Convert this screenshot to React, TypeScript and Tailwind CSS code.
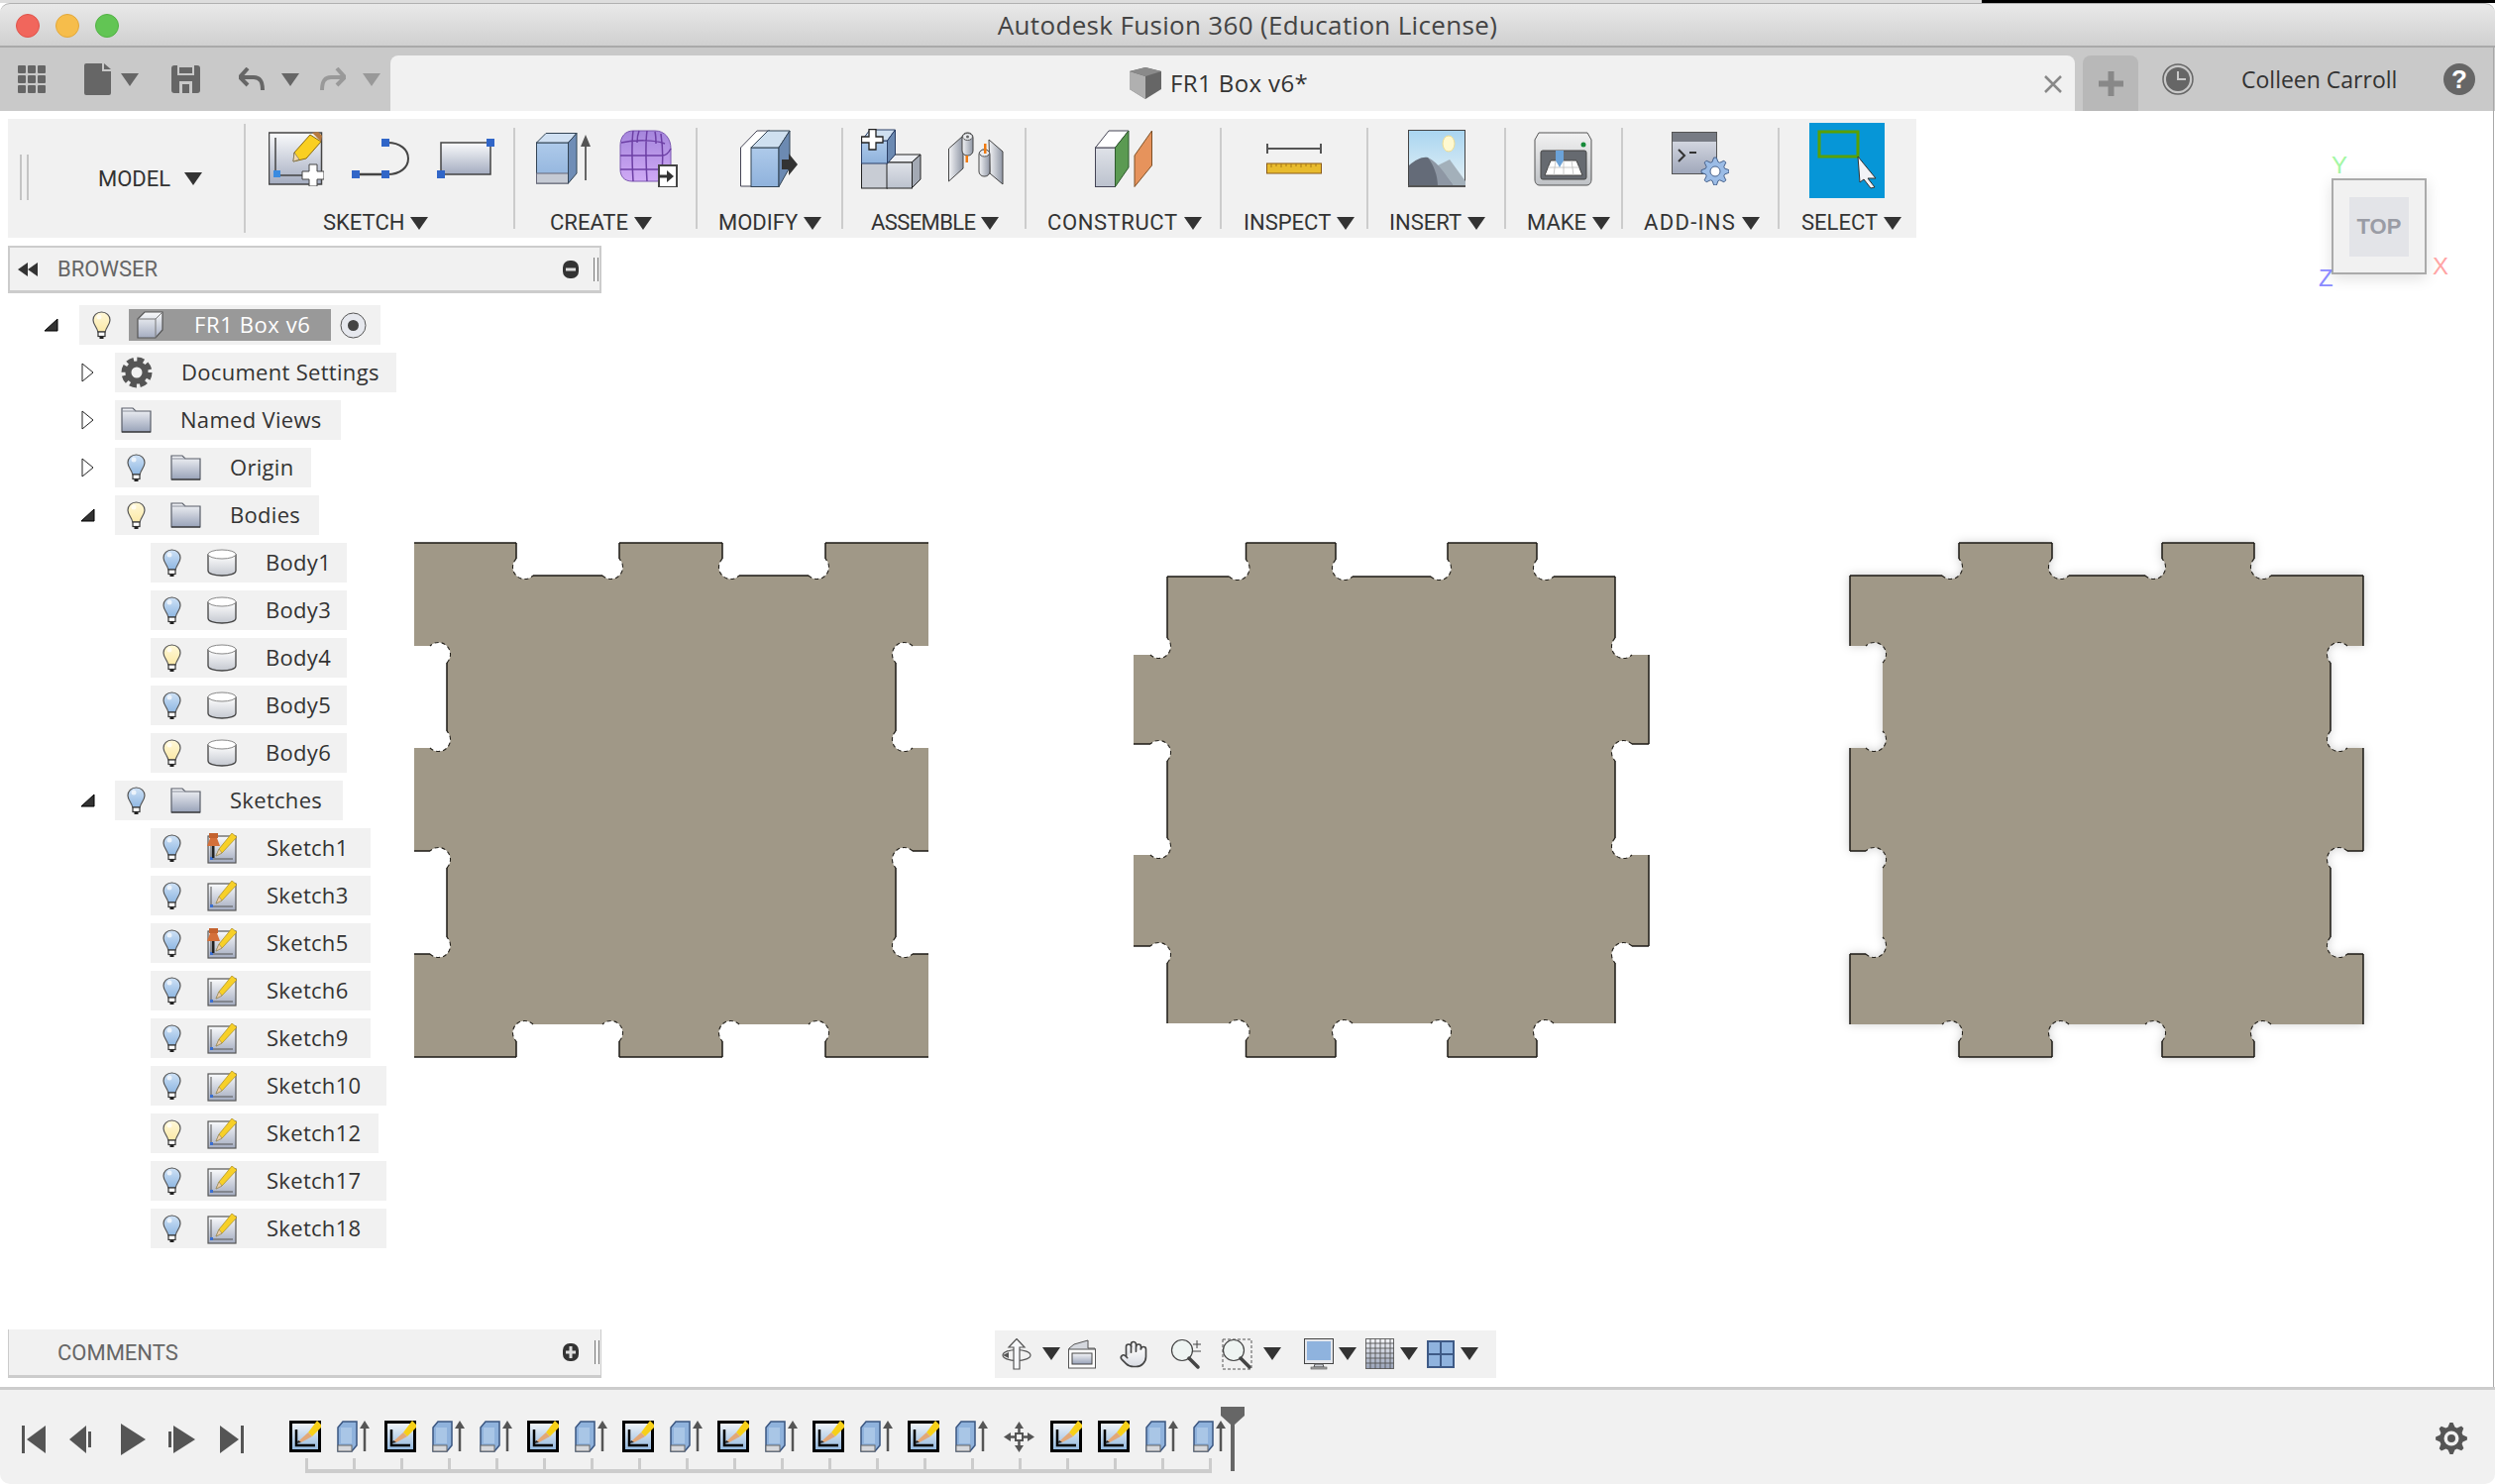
import React from "react";
import { Hand } from "lucide-react";

const Tri = ({ w = 18, h = 13, c = "#333" }: { w?: number; h?: number; c?: string }) => (
  <svg width={w} height={h} viewBox={`0 0 ${w} ${h}`} className="shrink-0">
    <polygon points={`0,0 ${w},0 ${w / 2},${h}`} fill={c} />
  </svg>
);

const Defs = () => (
  <svg width="0" height="0" className="absolute">
    <defs>
      <linearGradient id="gSheet" x1="0" y1="0" x2="0" y2="1"><stop offset="0" stopColor="#fafbfc" /><stop offset="1" stopColor="#a4acc0" /></linearGradient>
      <linearGradient id="gFolder" x1="0" y1="0" x2="0" y2="1"><stop offset="0" stopColor="#f4f5f8" /><stop offset="1" stopColor="#98a2b8" /></linearGradient>
      <linearGradient id="gBulbB" x1="0" y1="0" x2="0" y2="1"><stop offset="0" stopColor="#cfe2f6" /><stop offset="1" stopColor="#8fb7e2" /></linearGradient>
      <linearGradient id="gBulbY" x1="0" y1="0" x2="0" y2="1"><stop offset="0" stopColor="#fff8d8" /><stop offset="1" stopColor="#fbe9a8" /></linearGradient>
      <linearGradient id="gCyl" x1="0" y1="0" x2="0" y2="1"><stop offset="0" stopColor="#ffffff" /><stop offset="1" stopColor="#c4c8d0" /></linearGradient>
      <linearGradient id="gSide" x1="0" y1="0" x2="1" y2="0"><stop offset="0" stopColor="#f4f5f7" /><stop offset="1" stopColor="#8f96a4" /></linearGradient>
      <linearGradient id="gBlue" x1="0" y1="0" x2="0" y2="1"><stop offset="0" stopColor="#aecaea" /><stop offset="1" stopColor="#8fb2dc" /></linearGradient>
      <linearGradient id="gGrey" x1="0" y1="0" x2="0" y2="1"><stop offset="0" stopColor="#dfe2e8" /><stop offset="1" stopColor="#bcc2ce" /></linearGradient>
      <linearGradient id="gForm" x1="0" y1="0" x2="0" y2="1"><stop offset="0" stopColor="#a586dc" /><stop offset="1" stopColor="#cfa9f5" /></linearGradient>
      <linearGradient id="gSky" x1="0" y1="0" x2="0" y2="1"><stop offset="0" stopColor="#a9d5f0" /><stop offset="1" stopColor="#e6f1f6" /></linearGradient>
      <linearGradient id="gMake" x1="0" y1="0" x2="0" y2="1"><stop offset="0" stopColor="#f2f2f2" /><stop offset="1" stopColor="#bfc2c6" /></linearGradient>
      <linearGradient id="gTerm" x1="0" y1="0" x2="0" y2="1"><stop offset="0" stopColor="#e0e3ea" /><stop offset="1" stopColor="#a0a7ba" /></linearGradient>
      <linearGradient id="gMini" x1="0" y1="0" x2="0" y2="1"><stop offset="0" stopColor="#f4f6f8" /><stop offset="1" stopColor="#8fb6de" /></linearGradient>
      <linearGradient id="gHand" x1="0" y1="0" x2="0" y2="1"><stop offset="0" stopColor="#ffffff" /><stop offset="1" stopColor="#d8dbe2" /></linearGradient>
    </defs>
  </svg>
);

const Bulb = ({ on }: { on?: boolean }) => (
  <svg width="19" height="28" viewBox="0 0 19 28" className="shrink-0">
    <path d="M9.5 1C4.5 1 1 4.6 1 9c0 4.6 4 7.5 4.8 12h7.4C14 16.500 18 13.600 18 9c0-4.400-3.500-8-8.500-8Z" fill={on ? "url(#gBulbY)" : "url(#gBulbB)"} stroke="#555" strokeWidth="1.2" />
    <ellipse cx="7" cy="6" rx="2.500" ry="2.500" fill="#fff" opacity="0.7" />
    <rect x="6" y="21" width="7" height="4.500" fill="#fff" stroke="#333" strokeWidth="1.2" />
    <rect x="7.500" y="25.500" width="4" height="2.500" fill="#222" />
  </svg>
);

const Folder = () => (
  <svg width="31" height="26" viewBox="0 0 31 26" className="shrink-0">
    <path d="M1 25V1h11l3 3h15v21Z" fill="url(#gFolder)" stroke="#5a5f6a" strokeWidth="1.200" />
    <path d="M1 4h14" stroke="#8a8f9a" strokeWidth="1" />
    <path d="M1 25h29" stroke="#333" strokeWidth="1.200" />
  </svg>
);

const Cylinder = () => (
  <svg width="30" height="28" viewBox="0 0 30 28" className="shrink-0">
    <path d="M1 6v16c0 3 6 5 14 5s14-2 14-5V6Z" fill="url(#gCyl)" stroke="#444" strokeWidth="1.300" />
    <ellipse cx="15" cy="5.500" rx="14" ry="4.500" fill="#fff" stroke="#888" strokeWidth="1" />
  </svg>
);

const SketchIcon = ({ pin }: { pin?: boolean }) => (
  <svg width="31" height="31" viewBox="0 0 31 31" className="shrink-0">
    <rect x="1" y="3" width="28" height="27" fill="url(#gSheet)" stroke="#555" strokeWidth="1.200" />
    <path d="M4 6v20h22" fill="none" stroke="#555" strokeWidth="1" />
    <rect x="3" y="24" width="3" height="3" fill="#3a6ed0" />
    <polygon points="9,23 12,16 25,0 30,4 15,20" fill="#f7d028" stroke="#a88a20" strokeWidth="0.700" />
    <polygon points="9,23 12,16 15,20" fill="#f0cfa8" stroke="#776" strokeWidth="0.500" />
    {pin && (
      <g>
        <rect x="2" y="0" width="9" height="5" fill="#c4622e" />
        <polygon points="3,5 10,5 13,13 0,13" fill="#d4703a" />
        <rect x="5" y="13" width="2.500" height="12" fill="#222" />
      </g>
    )}
  </svg>
);

const BoxIcon = () => (
  <svg width="27" height="28" viewBox="0 0 27 28" className="shrink-0">
    <path d="M1 8 8 1h18v18l-7 8H1Z" fill="url(#gSheet)" stroke="#555" strokeWidth="1.200" />
    <path d="M1 8h18v19M19 8l7-7" fill="none" stroke="#777" strokeWidth="1" />
  </svg>
);

const GearDoc = () => (
  <svg width="32" height="32" viewBox="0 0 32 32" className="shrink-0">
    <circle cx="16" cy="16" r="13" fill="none" stroke="#555" strokeWidth="5" strokeDasharray="6.800 3.400" />
    <circle cx="16" cy="16" r="8.500" fill="none" stroke="#555" strokeWidth="6" />
  </svg>
);

const Expand = ({ open }: { open?: boolean }) =>
  open ? (
    <svg width="15" height="14" viewBox="0 0 15 14" className="-ml-[1px]"><polygon points="14,1 14,13 1,13" fill="#333" stroke="#000" /></svg>
  ) : (
    <svg width="13" height="20" viewBox="0 0 13 20"><polygon points="1,1 12,10 1,19" fill="#fff" stroke="#222" /></svg>
  );

const Row0 = () => (
  <div className="flex items-center h-10 mb-2 pl-[45px]">
    <div className="w-[35px] flex items-center"><Expand open /></div>
    <div className="h-10 w-[304px] bg-[#f1f1f1] flex items-center pl-[13px]">
      <Bulb on />
      <div className="ml-[18px] w-[204px] h-8 bg-[#999999] flex items-center pl-2 shrink-0">
        <BoxIcon />
        <span className="ml-[31px] -mt-[2px] text-white text-[22px] tracking-[0.6px]">FR1 Box v6</span>
      </div>
      <svg width="27" height="27" viewBox="0 0 27 27" className="ml-[9px] shrink-0">
        <circle cx="13.500" cy="13.500" r="12.500" fill="#e6e8ee" stroke="#555" />
        <circle cx="13.500" cy="13.500" r="5.500" fill="#444" />
      </svg>
    </div>
  </div>
);

const Row1 = ({ open, bulb, on, w, label, icon }: { open?: boolean; bulb?: boolean; on?: boolean; w: string; label: string; icon?: "gear" }) => (
  <div className="flex items-center h-10 mb-2 pl-[82px]">
    <div className="w-[34px] flex items-center"><Expand open={open} /></div>
    <div className={`h-10 ${w} bg-[#f1f1f1] flex items-center ${bulb ? "pl-3" : "pl-[6px]"}`}>
      {bulb && <Bulb on={on} />}
      <div className={bulb ? "ml-[25px]" : ""}>{icon === "gear" ? <GearDoc /> : <Folder />}</div>
      <span className={`${bulb ? "ml-[29px]" : "ml-[29px]"} -mt-[2px] text-[22px] text-[#333] tracking-[0.3px]`}>{label}</span>
    </div>
  </div>
);

const Row2 = ({ on, w, label, kind, pin }: { on?: boolean; w: string; label: string; kind: "body" | "sketch"; pin?: boolean }) => (
  <div className="flex items-center h-10 mb-2 pl-[152px]">
    <div className={`h-10 ${w} bg-[#f1f1f1] flex items-center pl-3`}>
      <Bulb on={on} />
      <div className="ml-[26px]">{kind === "body" ? <Cylinder /> : <SketchIcon pin={pin} />}</div>
      <span className="ml-[29px] -mt-[2px] text-[22px] text-[#333] tracking-[0.3px]">{label}</span>
    </div>
  </div>
);

const Blue = ({ x, y }: { x: number; y: number }) => <rect x={x} y={y} width="8" height="8" fill="#3166c8" />;

const IcoCreateSketch = () => (
  <svg width="56" height="55" viewBox="0 0 56 55" className="shrink-0">
    <rect x="0.500" y="1" width="53" height="52" fill="url(#gSheet)" stroke="#444" strokeWidth="1.500" />
    <path d="M7 6v38h34" fill="none" stroke="#444" strokeWidth="1.500" />
    <rect x="5" y="39" width="7" height="7" fill="#3a8be0" />
    <polygon points="25,30 26,21 42,3 53,10 38,27" fill="#f9cf22" stroke="#8a6a10" />
    <polygon points="25,30 26,21 31,28" fill="#f0d8b0" stroke="#666" strokeWidth="0.600" />
    <polygon points="44,1 50,0 54,4 53,10" fill="#b67a40" />
    <polygon points="41,33 49,33 49,40 56,40 56,48 49,48 49,55 41,55 41,48 34,48 34,40 41,40" fill="#fff" stroke="#444" />
  </svg>
);
const IcoLine = () => (
  <svg width="58" height="40" viewBox="0 0 58 40" className="shrink-0">
    <path d="M36 4c13 0 21 7 21 16s-8 16-21 16" fill="none" stroke="#444" strokeWidth="2" />
    <path d="M6 36h26" stroke="#444" strokeWidth="2.500" />
    <Blue x={30} y={0} /><Blue x={0} y={32} /><Blue x={30} y={32} />
  </svg>
);
const IcoRect = () => (
  <svg width="58" height="40" viewBox="0 0 58 40" className="shrink-0">
    <rect x="4" y="4" width="50" height="32" fill="url(#gSheet)" stroke="#444" strokeWidth="1.500" />
    <Blue x={50} y={0} /><Blue x={0} y={32} />
  </svg>
);
const IcoExtrude = () => (
  <svg width="55" height="52" viewBox="0 0 55 52" className="shrink-0">
    <rect x="0.500" y="10" width="32" height="41" fill="url(#gBlue)" stroke="#345" />
    <rect x="0.500" y="41" width="32" height="10" fill="#c5cad4" stroke="#667" />
    <polygon points="0.500,10 10,0.500 41,0.500 32.500,10" fill="#d0e0f2" stroke="#345" />
    <polygon points="32.500,10 41,0.500 41,41 32.500,51" fill="#6f8db6" stroke="#345" />
    <path d="M50 48V10" stroke="#666" strokeWidth="2" />
    <polygon points="50,2 55,14 45,14" fill="#555" />
  </svg>
);
const IcoForm = () => (
  <svg width="59" height="58" viewBox="0 0 59 58" className="shrink-0">
    <path d="M14 1h22c10 0 16 8 16 18v20c0 8-6 13-14 13H13C5 52 1 47 1 40V16C1 7 6 1 14 1Z" fill="url(#gForm)" stroke="#7a56b0" />
    <path d="M2 13c14-3 34-3 44 1 M1 26h42c4 0 7-3 9-7M1 40h44M14 1C12 16 13 35 14 52M28 1c-2 14-1 34 0 51M42 4c2 14 2 34 0 47M20 1c-2 5-2 9-2 12M36 2c1 4 1 8 1 12" stroke="#6c3fa4" strokeWidth="1.500" fill="none" />
    <rect x="40" y="36" width="18" height="22" fill="#fff" stroke="#444" strokeWidth="2" />
    <path d="M40 47h10" stroke="#333" strokeWidth="3" />
    <polygon points="48,41 55,47 48,53" fill="#333" />
  </svg>
);
const IcoPress = () => (
  <svg width="58" height="58" viewBox="0 0 58 58" className="shrink-0">
    <polygon points="0.500,57 0.500,18 17,1 30,1 12,18 12,57" fill="#fff" stroke="#445" />
    <rect x="11" y="18" width="28" height="39.500" fill="url(#gBlue)" stroke="#345" />
    <polygon points="11,18 28,1 50,1 39,18" fill="#cfe0f0" stroke="#345" />
    <polygon points="39,18 50,1 50,38 39,57.500" fill="#6c8ab2" stroke="#345" />
    <polygon points="42,30 49,30 49,24 58,35 49,46 49,40 42,40" fill="#333" />
  </svg>
);
const IcoJoint = () => (
  <svg width="61" height="61" viewBox="0 0 61 61" className="shrink-0">
    <polygon points="26,34 34,26 60,26 51,34" fill="#eef0f4" stroke="#222" />
    <polygon points="51,34 60,26 60,51 51,60" fill="#a3a9b4" stroke="#222" />
    <rect x="0.500" y="34" width="26" height="26" fill="#c8ccd4" stroke="#222" />
    <rect x="26" y="34" width="25.500" height="26" fill="url(#gGrey)" stroke="#222" />
    <rect x="0.500" y="12" width="26" height="23" fill="url(#gBlue)" stroke="#2a3f66" />
    <polygon points="0.500,12 9,1 34.500,1 26.500,12" fill="#cfe0f0" stroke="#2a3f66" />
    <polygon points="26.500,12 34.500,1 34.500,26 26.500,35" fill="#6c8ab2" stroke="#2a3f66" />
    <polygon points="8,0.500 15,0.500 15,8 22,8 22,14 15,14 15,21 8,21 8,14 0.500,14 0.500,8 8,8" fill="#fff" stroke="#222" strokeWidth="1.300" />
  </svg>
);
const IcoJoint2 = () => (
  <svg width="56" height="54" viewBox="0 0 56 54" className="shrink-0">
    <polygon points="0.500,17 15,4 15,37 0.500,50" fill="url(#gSide)" stroke="#444" />
    <rect x="14" y="1" width="11" height="23" rx="5" fill="url(#gSide)" stroke="#444" />
    <ellipse cx="19.500" cy="5" rx="5" ry="3.500" fill="#e9ebee" stroke="#555" />
    <circle cx="19.500" cy="5" r="1.500" fill="#666" />
    <rect x="17.500" y="24" width="2.500" height="7" fill="#f07a10" />
    <polygon points="41,8 55,20 55,53 42,42" fill="url(#gSide)" stroke="#444" />
    <rect x="31" y="18" width="11" height="27" rx="5" fill="url(#gSide)" stroke="#444" />
    <ellipse cx="36.500" cy="21.500" rx="5" ry="3.500" fill="#e9ebee" stroke="#555" />
    <rect x="36" y="12" width="2.500" height="10" fill="#f07a10" />
  </svg>
);
const IcoConstruct = () => (
  <svg width="58" height="58" viewBox="0 0 58 58" className="shrink-0">
    <rect x="0.500" y="18" width="20" height="39.500" fill="url(#gGrey)" stroke="#445" />
    <polygon points="0.500,18 14,1 34,1 20.500,18" fill="#fff" stroke="#445" />
    <polygon points="20.500,18 34,1 34,38 20.500,57.500" fill="#5b9a52" stroke="#2f5a2e" />
    <polygon points="40,57.500 40,26 57.500,1 57.500,36" fill="#e6935c" stroke="#7d5027" />
  </svg>
);
const IcoInspect = () => (
  <svg width="56" height="31" viewBox="0 0 56 31" className="shrink-0">
    <path d="M1 0v10M55 0v10M1 5h54" stroke="#555" strokeWidth="2" fill="none" />
    <rect x="0.500" y="20" width="55" height="10" fill="#e8bb2e" stroke="#8a5a18" />
    <path d="M5 20v4M10 20v3M15 20v4M20 20v3M25 20v4M30 20v3M35 20v4M40 20v3M45 20v4M50 20v3" stroke="#a87818" strokeWidth="1" />
  </svg>
);
const IcoInsert = () => (
  <svg width="58" height="58" viewBox="0 0 58 58" className="shrink-0">
    <rect x="0.500" y="0.500" width="57" height="57" fill="url(#gSky)" stroke="#444" />
    <ellipse cx="41" cy="14" rx="6" ry="8" fill="#fff9d0" stroke="#eedc90" />
    <polygon points="26,38 42,30 58,52 58,57 36,57" fill="#a3b0ba" />
    <path d="M1 36C8 30 14 27 20 28 28 34 38 46 46 57H1Z" fill="#646b78" />
    <path d="M20 28C32 34 38 46 46 57H30C30 46 26 36 20 28Z" fill="#8e97a4" />
    <rect x="0" y="56" width="58" height="2" fill="#555" />
  </svg>
);
const IcoMake = () => (
  <svg width="59" height="55" viewBox="0 0 59 55" className="shrink-0">
    <path d="M1 8 5 1h49l4 7v40c0 4-2 6-5 6H6c-3 0-5-2-5-6Z" fill="url(#gMake)" stroke="#555" />
    <rect x="7" y="19" width="46" height="29" rx="2" fill="#666a70" stroke="#444" />
    <polygon points="11,44 17,29 43,29 49,44" fill="#fff" stroke="#444" />
    <path d="M14 36h32M22 29l-2 15M30 29v15M38 29l2 15" stroke="#bbb" strokeWidth="0.800" />
    <polygon points="22,19 30,19 30,29 26,36 22,29" fill="#6ba2d8" />
    <circle cx="50" cy="13" r="2.500" fill="#168a3a" />
  </svg>
);
const gearD = (cx: number, cy: number, n: number, R: number, r: number) => {
  let d = "";
  for (let i = 0; i < n * 4; i++) {
    const a = (i / (n * 4)) * Math.PI * 2;
    const rad = i % 4 < 2 ? R : r;
    d += `${i ? "L" : "M"}${(cx + rad * Math.cos(a - 0.1)).toFixed(1)} ${(cy + rad * Math.sin(a - 0.1)).toFixed(1)}`;
  }
  return d + "Z";
};
const IcoAddins = () => (
  <svg width="58" height="54" viewBox="0 0 58 54" className="shrink-0">
    <rect x="0.500" y="0.500" width="45" height="42" fill="url(#gTerm)" stroke="#555" />
    <rect x="1" y="1" width="44" height="9" fill="#777b84" />
    <path d="M7 18l6 6-6 6M18 21h7" fill="none" stroke="#333" strokeWidth="2" />
    <path d={gearD(44, 40, 8, 14, 10)} fill="#9bbce6" stroke="#47628c" />
    <circle cx="44" cy="40" r="5" fill="#fff" stroke="#47628c" />
  </svg>
);
const IcoSelect = () => (
  <div className="relative w-[76px] h-[76px] bg-[#0696d7] shrink-0 self-start">
    <svg width="76" height="76" viewBox="0 0 76 76">
      <rect x="10" y="9" width="39" height="25" fill="none" stroke="#5aa000" strokeWidth="3" />
      <polygon points="49,34 67,56 59,56 66,65 62,66 55,57 51,60" fill="#f2f3f6" stroke="#333" />
    </svg>
  </div>
);

const Divider = ({ tall }: { tall?: boolean }) => (
  <div className={`w-[2px] ${tall ? "h-[110px]" : "h-[102px]"} bg-[#cccccc] self-center shrink-0`} />
);

const Group = ({ w, pl, gap, lpl, label, lc, children }: { w: string; pl: string; gap?: string; lpl: string; label: string; lc?: string; children: React.ReactNode }) => (
  <div className={`${w} shrink-0 flex flex-col`}>
    <div className={`h-[72px] mt-1 flex items-center ${pl} ${gap ?? ""}`}>{children}</div>
    <div className={`mt-[18px] h-[22px] flex items-center gap-[6px] ${lpl}`}>
      <span className={`text-[22px] leading-none text-[#333] font-['Roboto',sans-serif] ${lc ?? ""}`}>{label}</span>
      <Tri />
    </div>
  </div>
);

const Toolbar = () => (
  <div className="ml-2 mt-2 h-[120px] w-[1926px] bg-[#f1f1f1] flex shrink-0">
    <div className="w-[238px] flex items-center shrink-0 pl-3">
      <div className="w-[9px] h-[46px] border-x-2 border-[#c4c4c4] -mt-[3px]" />
      <span className="ml-[70px] text-[22px] text-[#333] font-['Roboto',sans-serif]">MODEL</span>
      <div className="ml-[14px]"><Tri /></div>
    </div>
    <Divider tall />
    <Group w="w-[270px]" pl="pl-[23px]" gap="gap-[28px]" lpl="pl-[78px]" label="SKETCH"><IcoCreateSketch /><IcoLine /><IcoRect /></Group>
    <Divider />
    <Group w="w-[182px]" pl="pl-[21px]" gap="gap-[29px]" lpl="pl-[35px]" label="CREATE"><IcoExtrude /><IcoForm /></Group>
    <Divider />
    <Group w="w-[145px]" pl="pl-[43px]" lpl="pl-[21px]" label="MODIFY"><IcoPress /></Group>
    <Divider />
    <Group w="w-[183px]" pl="pl-[18px]" gap="gap-[27px]" lpl="pl-[28px]" label="ASSEMBLE" lc="tracking-[-0.6px]"><IcoJoint /><IcoJoint2 /></Group>
    <Divider />
    <Group w="w-[195px]" pl="pl-[69px]" lpl="pl-[21px]" label="CONSTRUCT" lc="tracking-[0.6px]"><IcoConstruct /></Group>
    <Divider />
    <Group w="w-[146px]" pl="pl-[45px]" lpl="pl-[22px]" label="INSPECT"><IcoInspect /></Group>
    <Divider />
    <Group w="w-[137px]" pl="pl-[40px]" lpl="pl-[21px]" label="INSERT"><IcoInsert /></Group>
    <Divider />
    <Group w="w-[116px]" pl="pl-[28px]" lpl="pl-[21px]" label="MAKE"><IcoMake /></Group>
    <Divider />
    <Group w="w-[156px]" pl="pl-[49px]" lpl="pl-[21px]" label="ADD-INS" lc="tracking-[1.3px]"><IcoAddins /></Group>
    <Divider />
    <Group w="w-[138px]" pl="pl-[30px]" lpl="pl-[22px]" label="SELECT"><IcoSelect /></Group>
  </div>
);

const MinusPlus = ({ plus }: { plus?: boolean }) => (
  <svg width="16" height="20" viewBox="0 0 16 20" className="ml-auto shrink-0">
    <rect x="0" y="1" width="16" height="18" rx="7" fill="#333" />
    <rect x="3" y="8.500" width="10" height="3" fill="#ddd" />
    {plus && <rect x="6.500" y="4" width="3" height="12" fill="#ddd" />}
  </svg>
);
const Grip = () => <div className="ml-[15px] mr-[1px] w-[5px] h-[24px] border-x border-[#777] shrink-0" />;

const BrowserHeader = () => (
  <div className="ml-2 mt-2 w-[599px] h-12 bg-[#f1f1f1] border-2 border-b-[3px] border-[#cccccc] flex items-center shrink-0">
    <svg width="20" height="14" viewBox="0 0 20 14" className="ml-2 shrink-0"><polygon points="0,7 10,0 10,14" fill="#333" /><polygon points="10,7 20,0 20,14" fill="#333" /></svg>
    <span className="ml-5 text-[22px] text-[#666] font-['Roboto',sans-serif]">BROWSER</span>
    <MinusPlus />
    <Grip />
  </div>
);

const Tree = () => (
  <div className="mt-3 flex flex-col">
    <Row0 />
    <Row1 icon="gear" w="w-[284px]" label="Document Settings" />
    <Row1 w="w-[228px]" label="Named Views" />
    <Row1 bulb w="w-[198px]" label="Origin" />
    <Row1 open bulb on w="w-[206px]" label="Bodies" />
    <Row2 kind="body" w="w-[198px]" label="Body1" />
    <Row2 kind="body" w="w-[198px]" label="Body3" />
    <Row2 kind="body" on w="w-[198px]" label="Body4" />
    <Row2 kind="body" w="w-[198px]" label="Body5" />
    <Row2 kind="body" on w="w-[198px]" label="Body6" />
    <Row1 open bulb w="w-[230px]" label="Sketches" />
    <Row2 kind="sketch" pin w="w-[222px]" label="Sketch1" />
    <Row2 kind="sketch" w="w-[222px]" label="Sketch3" />
    <Row2 kind="sketch" pin w="w-[222px]" label="Sketch5" />
    <Row2 kind="sketch" w="w-[222px]" label="Sketch6" />
    <Row2 kind="sketch" w="w-[222px]" label="Sketch9" />
    <Row2 kind="sketch" w="w-[238px]" label="Sketch10" />
    <Row2 kind="sketch" on w="w-[230px]" label="Sketch12" />
    <Row2 kind="sketch" w="w-[238px]" label="Sketch17" />
    <Row2 kind="sketch" w="w-[238px]" label="Sketch18" />
  </div>
);

/* laser-cut panel outlines */
type P = [number, number];
function panel(w: number, h: number, d: number, top: number[], left: number[], topOut: boolean, leftOut: boolean) {
  const pts: P[] = [];
  pts.push([leftOut ? 0 : d, topOut ? 0 : d]);
  let s = topOut;
  for (const b of top) { pts.push([b, s ? 0 : d]); s = !s; pts.push([b, s ? 0 : d]); }
  pts.push([leftOut ? w : w - d, topOut ? 0 : d]);
  s = leftOut;
  for (const b of left) { pts.push([s ? w : w - d, b]); s = !s; pts.push([s ? w : w - d, b]); }
  pts.push([leftOut ? w : w - d, topOut ? h : h - d]);
  s = topOut;
  for (const b of [...top].reverse()) { pts.push([b, s ? h : h - d]); s = !s; pts.push([b, s ? h : h - d]); }
  pts.push([leftOut ? 0 : d, topOut ? h : h - d]);
  s = leftOut;
  for (const b of [...left].reverse()) { pts.push([s ? 0 : d, b]); s = !s; pts.push([s ? 0 : d, b]); }
  return pts;
}

const Panel = ({ cls, w, h, pts, skipH, skipV }: { cls: string; w: number; h: number; pts: P[]; skipH: number[]; skipV: number[] }) => {
  const L = 17;
  const R = 12;
  const n = pts.length;
  const unit = (a: P, b: P): P => {
    const len = Math.hypot(b[0] - a[0], b[1] - a[1]) || 1;
    return [(b[0] - a[0]) / len, (b[1] - a[1]) / len];
  };
  const concave = pts.map((v, i) => {
    const d1 = unit(pts[(i + n - 1) % n], v);
    const d2 = unit(v, pts[(i + 1) % n]);
    return d1[0] * d2[1] - d1[1] * d2[0] < 0;
  });
  let fill = "";
  let arcs = "";
  let lines = "";
  pts.forEach((v, i) => {
    const prev = pts[(i + n - 1) % n];
    const next = pts[(i + 1) % n];
    const d1 = unit(prev, v);
    const d2 = unit(v, next);
    const start: P = concave[(i + n - 1) % n] ? [prev[0] + d1[0] * L, prev[1] + d1[1] * L] : prev;
    const end: P = concave[i] ? [v[0] - d1[0] * L, v[1] - d1[1] * L] : v;
    const horizontal = prev[1] === v[1];
    const skip = horizontal ? skipH.includes(v[1]) : skipV.includes(v[0]);
    if (!skip) lines += `M${start[0]} ${start[1]}L${end[0]} ${end[1]}`;
    fill += `${i === 0 ? "M" : "L"}${end[0]} ${end[1]}`;
    if (concave[i]) {
      const p2: P = [v[0] + d2[0] * L, v[1] + d2[1] * L];
      const arc = `A${R} ${R} 0 0 0 ${v[0]} ${v[1]}A${R} ${R} 0 0 0 ${p2[0]} ${p2[1]}`;
      fill += arc;
      arcs += `M${end[0]} ${end[1]}${arc}`;
    }
  });
  return (
    <svg width={w} height={h} viewBox={`0 0 ${w} ${h}`} className={`absolute overflow-visible ${cls}`}>
      <path d={fill + "Z"} fill="#a09887" />
      <path d={lines} fill="none" stroke="#1c1a16" strokeWidth="1.500" />
      <path d={arcs} fill="none" stroke="#26231d" strokeWidth="1.100" strokeDasharray="4 3" />
    </svg>
  );
};

const ViewCube = () => (
  <div className="absolute left-[2340px] top-[44px] w-[130px] h-[134px] font-['Liberation_Sans',sans-serif]">
    <span className="absolute left-[13px] top-0 text-[24px] leading-[22px] text-[#a4f7a4]">Y</span>
    <div className="absolute left-[13px] top-6 w-[96px] h-[97px] border-2 border-[#aaaaaa] bg-[#f1f1f1] shadow-[0_4px_14px_rgba(0,0,0,0.12)] flex items-center justify-center">
      <div className="w-[60px] h-[60px] bg-[#e3e4e8] flex items-center justify-center text-[22px] font-bold text-[#9a9ca5]">TOP</div>
    </div>
    <span className="absolute left-[115px] top-[102px] text-[24px] leading-[22px] text-[#ffa4a4]">X</span>
    <span className="absolute left-0 top-[114px] text-[24px] leading-[22px] text-[#8a8aff]">Z</span>
  </div>
);

const IcoOrbit = () => (
  <svg width="30" height="32" viewBox="0 0 30 32">
    <ellipse cx="15" cy="17" rx="14" ry="5.500" fill="none" stroke="#555" strokeWidth="1.200" />
    <polygon points="15,0.500 23,9 18,9 18,31 12,31 12,9 7,9" fill="#f6f7f9" stroke="#555" strokeWidth="1.200" />
    <polygon points="1,17 7,14 7,20" fill="#555" />
  </svg>
);
const IcoLook = () => (
  <svg width="28" height="30" viewBox="0 0 28 30">
    <polygon points="1,12 1,9 6,5 20,1 20,9 27,9 27,12" fill="#d5d8de" stroke="#555" />
    <rect x="0.500" y="10" width="27" height="19" fill="#fff" stroke="#555" />
    <rect x="4" y="14" width="20" height="11" fill="url(#gFolder)" stroke="#444" />
  </svg>
);
const IcoZoom = ({ win }: { win?: boolean }) => (
  <svg width="31" height="32" viewBox="0 0 31 32">
    {win && <rect x="1" y="1" width="29" height="30" fill="none" stroke="#555" strokeDasharray="3 2" />}
    <circle cx="12" cy="12" r="10.500" fill="#eef4f2" stroke="#444" strokeWidth="1.200" />
    <path d="M19 20l9 9" stroke="#444" strokeWidth="3.500" strokeLinecap="round" />
    {!win && <path d="M23 6h8M27 2v8M23 13h8" stroke="#444" strokeWidth="1" />}
  </svg>
);
const IcoMonitor = () => (
  <svg width="30" height="32" viewBox="0 0 30 32">
    <rect x="0.500" y="0.500" width="29" height="25" fill="#e5e7ec" stroke="#444" />
    <rect x="3" y="3" width="24" height="19" fill="#8fb3de" />
    <polygon points="11,26 19,26 20,29 10,29" fill="#cdd0d6" stroke="#555" />
    <rect x="7" y="29" width="16" height="2" fill="#aaa" stroke="#555" strokeWidth="0.600" />
  </svg>
);
const IcoGrid = () => (
  <svg width="29" height="31" viewBox="0 0 29 31">
    <rect x="0.500" y="0.500" width="28" height="30" fill="url(#gFolder)" stroke="#666" />
    <path d="M5 0v31M10 0v31M15 0v31M20 0v31M25 0v31M0 5h29M0 10h29M0 15h29M0 20h29M0 25h29" stroke="#555" strokeWidth="0.900" />
  </svg>
);
const IcoViews = () => (
  <svg width="28" height="28" viewBox="0 0 28 28">
    <rect x="0.500" y="0.500" width="27" height="27" fill="#3e5a86" stroke="#3e5a86" />
    <rect x="2" y="2" width="11" height="11" fill="#8fb3de" />
    <rect x="15" y="2" width="11" height="11" fill="#8fb3de" />
    <rect x="2" y="15" width="11" height="11" fill="#8fb3de" />
    <rect x="15" y="15" width="11" height="11" fill="#8fb3de" />
  </svg>
);

const ViewBar = () => (
  <div className="mr-auto ml-[397px] w-[506px] h-12 bg-[#f1f1f1] flex items-center shrink-0 pl-[7px]">
    <IcoOrbit />
    <div className="ml-[11px]"><Tri /></div>
    <div className="ml-2"><IcoLook /></div>
    <Hand className="ml-[23px] w-[30px] h-[32px]" strokeWidth={1.300} color="#444" fill="url(#gHand)" />
    <div className="ml-[22px]"><IcoZoom /></div>
    <div className="ml-[21px]"><IcoZoom win /></div>
    <div className="ml-[11px]"><Tri /></div>
    <div className="ml-[23px]"><IcoMonitor /></div>
    <div className="ml-[5px]"><Tri /></div>
    <div className="ml-[9px]"><IcoGrid /></div>
    <div className="ml-[6px]"><Tri /></div>
    <div className="ml-[9px]"><IcoViews /></div>
    <div className="ml-[6px]"><Tri /></div>
  </div>
);

const Comments = () => (
  <div className="ml-2 w-[599px] h-[49px] bg-[#f1f1f1] border-l border-r border-b-[3px] border-[#cccccc] flex items-center shrink-0 pl-[49px]">
    <span className="text-[22px] text-[#666] font-['Roboto',sans-serif]">COMMENTS</span>
    <MinusPlus plus />
    <div className="ml-[16px] mr-[1px] w-[5px] h-[24px] border-x border-[#777] shrink-0" />
  </div>
);

const MiniSketch = () => (
  <svg width="32" height="32" viewBox="0 0 32 32">
    <rect x="1.500" y="1.500" width="29" height="29" fill="url(#gMini)" stroke="#000" strokeWidth="3" />
    <path d="M7 9v16h19" fill="none" stroke="#000" strokeWidth="2.500" />
    <polygon points="19,12 28,0 32,4 32,7 23,16" fill="#f7d018" />
    <polygon points="9,21 19,12 23,16 12,22" fill="#e3a878" />
    <polygon points="7,23 9,20 12,22" fill="#222" />
  </svg>
);
const MiniExtrude = () => (
  <svg width="33" height="32" viewBox="0 0 33 32">
    <path d="M1 7l5-6h14v24l-5 6H1Z" fill="#8fb2dc" stroke="#3a5580" strokeWidth="1.500" />
    <rect x="4" y="7" width="11" height="16" fill="#a9c6e6" />
    <rect x="1" y="25" width="14" height="6" fill="#d6d8dc" stroke="#666" />
    <path d="M28 31V6" stroke="#555" strokeWidth="2.500" />
    <polygon points="28,0 33,8 23,8" fill="#555" />
  </svg>
);
const MiniMove = () => (
  <svg width="33" height="32" viewBox="0 0 33 32">
    <rect x="13" y="13" width="7" height="7" fill="none" stroke="#555" strokeWidth="2" />
    <path d="M16.500 8v4M16.500 21v4M8 16.500h4M21 16.500h4" stroke="#555" strokeWidth="2.500" />
    <polygon points="16.500,1 21,8 12,8" fill="#555" />
    <polygon points="16.500,32 21,25 12,25" fill="#555" />
    <polygon points="1,16.500 8,12 8,21" fill="#555" />
    <polygon points="32,16.500 25,12 25,21" fill="#555" />
  </svg>
);

const Player = () => (
  <div className="flex items-center pl-[22px] shrink-0">
    <svg width="24" height="28" viewBox="0 0 24 28"><rect width="3" height="28" fill="#555" /><polygon points="24,0 24,28 5,14" fill="#555" /></svg>
    <svg width="27" height="28" viewBox="0 0 27 28" className="ml-6"><polygon points="17,0 17,28 0,14" fill="#555" /><rect x="19" y="6" width="3" height="16" fill="#555" /></svg>
    <svg width="25" height="32" viewBox="0 0 25 32" className="ml-[25px]"><polygon points="0,0 25,16 0,32" fill="#555" /></svg>
    <svg width="27" height="28" viewBox="0 0 27 28" className="ml-[23px]"><rect x="0" y="6" width="3" height="16" fill="#555" /><polygon points="5,0 27,14 5,28" fill="#555" /></svg>
    <svg width="24" height="28" viewBox="0 0 24 28" className="ml-[25px]"><polygon points="0,0 19,14 0,28" fill="#555" /><rect x="21" width="3" height="28" fill="#555" /></svg>
  </div>
);

const seq = ["s", "e", "s", "e", "e", "s", "e", "s", "e", "s", "e", "s", "e", "s", "e", "m", "s", "s", "e", "e"];

const Timeline = () => (
  <div className="relative h-[98px] border-t-[3px] border-[#cccccc] bg-[#f1f1f1] rounded-b-[10px] flex items-start shrink-0 pt-[31px]">
    <div className="mt-[3px]"><Player /></div>
    <div className="ml-[46px] flex flex-col">
      <div className="flex">
        {seq.map((k, i) => (
          <div key={i} className="w-12 h-8">
            {k === "s" ? <MiniSketch /> : k === "e" ? <MiniExtrude /> : <MiniMove />}
          </div>
        ))}
      </div>
      <div className="ml-[16px] mt-[6px] h-[15px] w-[915px] border-b-[4px] border-[#cccccc] flex justify-between">
        {seq.map((_, i) => (
          <div key={i} className="w-[3px] h-[11px] bg-[#cccccc]" />
        ))}
      </div>
    </div>
    <svg width="24" height="65" viewBox="0 0 24 65" className="absolute left-[1232px] top-[17px]">
      <polygon points="0,0 24,0 24,9 14,18 14,65 10,65 10,18 0,9" fill="#666" />
    </svg>
    <svg width="34" height="34" viewBox="0 0 34 34" className="ml-auto mr-[27px] mt-[1px] shrink-0">
      <path d={gearD(17, 17, 8, 16, 12)} fill="#555" />
      <circle cx="17" cy="17" r="7.500" fill="#f1f1f1" />
      <circle cx="17" cy="17" r="4" fill="#555" />
    </svg>
  </div>
);

const s1 = panel(519, 519, 33, [103, 207, 311, 415], [104, 207, 311, 415], true, true);
const s2 = panel(520, 519, 34, [113.5, 204, 317, 407], [113, 203, 315, 407], false, false);
const s3 = panel(518, 519, 33, [110, 204, 315, 408], [104, 207, 311, 415], false, true);

export default function App() {
  return (
    <div className="w-[2518px] h-[1498px] bg-white flex flex-col overflow-hidden font-['Open_Sans',sans-serif] relative">
      <Defs />
      <div className="h-[3px] flex shrink-0">
        <div className="w-[2000px] bg-[#dddddd]" />
        <div className="flex-1 bg-black" />
      </div>
      <div className="relative h-[45px] border-t border-b-2 border-t-[#b0b0b0] border-b-[#a9a9a9] bg-gradient-to-b from-[#e9e9e9] to-[#d0d0d0] rounded-t-[10px] flex items-center justify-center text-[26px] tracking-[0.33px] text-[#444] shrink-0">
        <div className="absolute left-4 top-[10px] flex gap-4">
          <div className="w-6 h-6 rounded-full bg-[#f1665c] border border-[#e0534a]" />
          <div className="w-6 h-6 rounded-full bg-[#f6bd4b] border border-[#e2a83a]" />
          <div className="w-6 h-6 rounded-full bg-[#62c554] border border-[#52b244]" />
        </div>
        Autodesk Fusion 360 (Education License)
      </div>
      <div className="h-[64px] bg-[#c9c9c9] flex items-center shrink-0 relative">
        <svg width="28" height="28" viewBox="0 0 28 28" className="ml-[18px] shrink-0" fill="#666">
          {[0, 10, 20].map((x) => [0, 10, 20].map((y) => <rect key={`${x}-${y}`} x={x} y={y} width="8" height="8" rx="1" />))}
        </svg>
        <svg width="27" height="32" viewBox="0 0 27 32" className="ml-[39px] shrink-0"><path d="M0 2a2 2 0 0 1 2-2h16v8h9v22a2 2 0 0 1-2 2H2a2 2 0 0 1-2-2Z" fill="#666" /><path d="M20 0l7 6h-7Z" fill="#666" /></svg>
        <div className="ml-[10px]"><Tri c="#666" /></div>
        <svg width="29" height="28" viewBox="0 0 29 28" className="ml-[33px] shrink-0"><path d="M3 0h23a3 3 0 0 1 3 3v22a3 3 0 0 1-3 3H3a3 3 0 0 1-3-3V3a3 3 0 0 1 3-3Z" fill="#666" /><rect x="6" y="0" width="17" height="10" fill="#c9c9c9" /><rect x="8" y="2" width="13" height="6" fill="#666" /><rect x="8" y="16" width="13" height="12" fill="#c9c9c9" /><rect x="11" y="19" width="7" height="9" fill="#666" /></svg>
        <svg width="27" height="24" viewBox="0 0 27 24" className="ml-[39px] shrink-0"><path d="M9 1 1 10l8 8M2 10h13c7 0 9 5 9 13" fill="none" stroke="#666" strokeWidth="4" /></svg>
        <div className="ml-4"><Tri c="#666" /></div>
        <svg width="27" height="24" viewBox="0 0 27 24" className="ml-5 shrink-0"><path d="M18 1l8 9-8 8M25 10H12C5 10 3 15 3 23" fill="none" stroke="#999" strokeWidth="4" /></svg>
        <div className="ml-[17px]"><Tri c="#999" /></div>
      </div>
      {/* document tab row overlays the title strip's lower half */}
      <div className="absolute left-[394px] top-[56px] w-[1700px] h-14 bg-[#f1f1f1] rounded-tl-[8px] rounded-tr-[8px] flex items-center">
        <svg width="32" height="32" viewBox="0 0 32 32" className="ml-[746px] shrink-0">
          <polygon points="0,4 16,0 32,4 32,22 16,32 0,22" fill="#666" />
          <polygon points="0,4 16,9 16,32 0,22" fill="#b0b0b0" />
          <polygon points="0,4 16,0 32,4 16,9" fill="#8a8a8a" />
        </svg>
        <span className="ml-[9px] text-[24px] tracking-[0.4px] text-[#333]">FR1 Box v6*</span>
        <svg width="18" height="18" viewBox="0 0 18 18" className="absolute left-[1669px] top-[20px]"><path d="M1 1l16 16M17 1 1 17" stroke="#888" strokeWidth="2.500" /></svg>
      </div>
      <div className="absolute left-[2102px] top-[56px] w-14 h-14 bg-[#b8b8b8] rounded-t-[8px] flex items-center justify-center">
        <svg width="25" height="25" viewBox="0 0 25 25"><path d="M12.500 0v25M0 12.500h25" stroke="#888" strokeWidth="6" /></svg>
      </div>
      <svg width="32" height="32" viewBox="0 0 32 32" className="absolute left-[2182px] top-16">
        <circle cx="16" cy="16" r="15" fill="none" stroke="#666" strokeWidth="1.500" />
        <circle cx="16" cy="16" r="12" fill="#666" />
        <path d="M16 8v8h8" fill="none" stroke="#c9c9c9" strokeWidth="2" />
      </svg>
      <span className="absolute left-[2262px] top-[64px] leading-8 text-[23px] text-[#333]">Colleen Carroll</span>
      <div className="absolute left-[2466px] top-16 w-8 h-8 rounded-full bg-[#666666] flex items-center justify-center text-white font-bold text-[26px] font-['Liberation_Sans',sans-serif]">?</div>
      <div className="absolute right-[1px] top-[48px] bottom-[6px] w-[1px] bg-[#a8a8a8]" />

      <div className="flex-1 relative flex flex-col min-h-0">
        <Panel cls="left-[418px] top-[436px]" w={519} h={519} pts={s1} skipH={[104, 207, 486]} skipV={[0, 519]} />
        <Panel cls="left-[1144px] top-[436px]" w={520} h={519} pts={s2} skipH={[113, 315, 485]} skipV={[0]} />
        <Panel cls="left-[1867px] top-[436px] [filter:drop-shadow(0_0_5px_rgba(0,0,0,0.18))]" w={518} h={519} pts={s3} skipH={[104, 207, 486]} skipV={[33]} />
        <ViewCube />
        <div className="relative flex flex-col flex-1 min-h-0">
          <Toolbar />
          <BrowserHeader />
          <Tree />
          <div className="mt-auto mb-[9px] flex items-center">
            <Comments />
            <ViewBar />
          </div>
        </div>
      </div>
      <Timeline />
    </div>
  );
}
